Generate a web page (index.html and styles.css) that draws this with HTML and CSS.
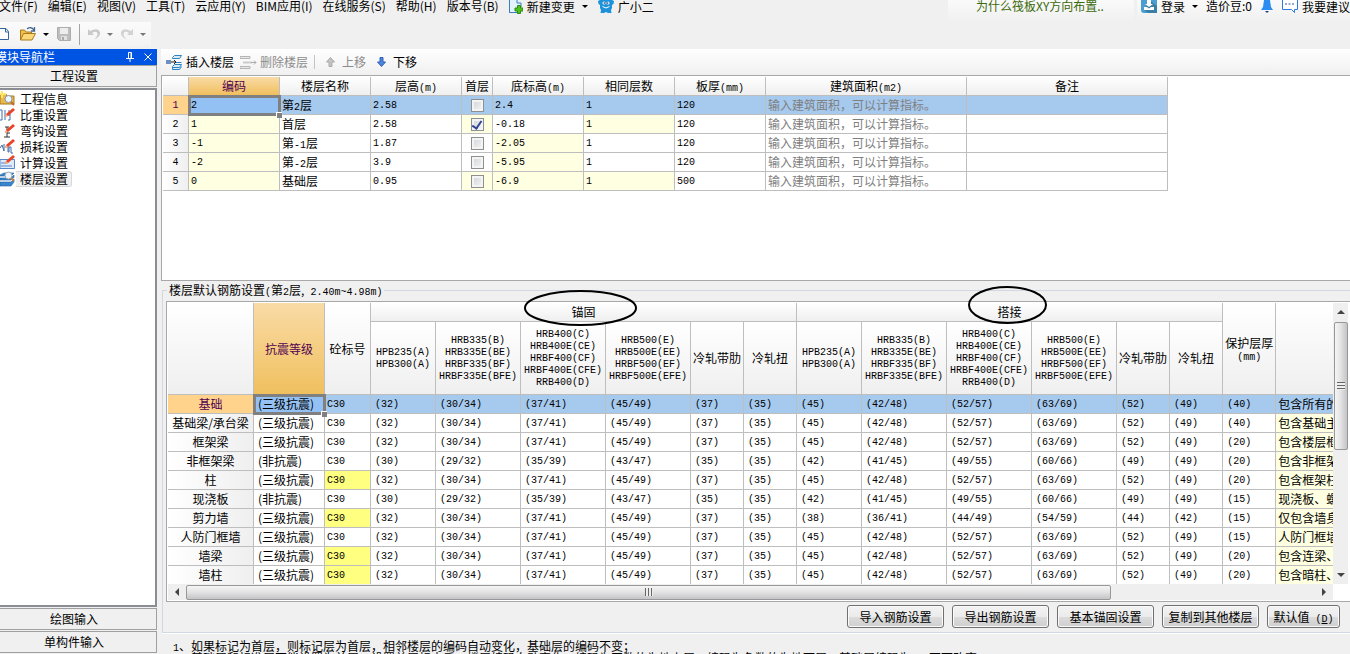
FILE: index.html
```
<!DOCTYPE html>
<html lang="zh-CN">
<head>
<meta charset="utf-8">
<title>楼层设置</title>
<link rel="stylesheet" href="styles.css">
</head>
<body>
<header class="top">
  <nav class="menubar">
    <button class="menu">文件(F)</button>
    <button class="menu">编辑(E)</button>
    <button class="menu">视图(V)</button>
    <button class="menu">工具(T)</button>
    <button class="menu">云应用(Y)</button>
    <button class="menu">BIM应用(I)</button>
    <button class="menu">在线服务(S)</button>
    <button class="menu">帮助(H)</button>
    <button class="menu">版本号(B)</button>
    <button class="menu with-icon">
      <svg width="14" height="14" viewBox="0 0 14 14"><path d="M.5-2v14.500h9" fill="#e8f5fc" stroke="#3c7fc0"/><path d="M1 0h11v7H7v5H1z" fill="#e3f3fb"/><path d="M.5 0v12.500h7M8 0v3h4v4" fill="none" stroke="#3c7fc0"/><path d="M8.500 5.500h3v2.500H14v3h-2.500v2.500h-3V11H6V8h2.500z" fill="#4cc21c" stroke="#2b8a12"/></svg>
      新建变更<i class="caret"></i>
    </button>
    <button class="menu with-icon">
      <svg width="16" height="13" viewBox="0 0 16 13"><path d="M2 0h12l2 1-.500 3-1.500 1v3l-1 2 .500 3H10l-2-1-2 1H2.500L3 10 2 8V5L.500 4 0 1z" fill="#1c92dc"/><circle cx="6" cy="3" r="1.500" fill="#fff"/><circle cx="10" cy="3" r="1.500" fill="#fff"/><circle cx="6.300" cy="3" r=".7" fill="#123"/><circle cx="9.700" cy="3" r=".7" fill="#123"/><path d="M4.500 6.500q3.500 3 7 0" fill="none" stroke="#fff"/></svg>
      广小二
    </button>
    <div class="account">
      <a class="tip" href="#">为什么筏板XY方向布置..</a>
      <div class="user">
        <button class="menu with-icon">
          <svg width="16" height="13" viewBox="0 0 16 13"><path d="M0 0h16v10q0 3-3 3H3q-3 0-3-3z" fill="#4a9fd0"/><path d="M8 0l8 6v7H7l-4-3z" fill="#3b7ea6"/><path d="M6 0h4v4h2L8 7 4 4h2zM3 7l3 0 2 1.500L10 7h3v3H3z" fill="#fff"/></svg>
          登录<i class="caret"></i>
        </button>
        <button class="menu">造价豆:0</button>
        <button class="menu with-icon" aria-label="通知">
          <svg width="14" height="13" viewBox="0 0 14 13"><path d="M4 0h6l1 7 2 3H1l2-3z" fill="#2c8cf0"/><path d="M5 11h4l-2 2z" fill="#1a3f74"/></svg>
        </button>
        <button class="menu with-icon">
          <svg width="16" height="13" viewBox="0 0 16 13"><path d="M.5 0v9.500h9l3 3v-3h3V0" fill="#fff" stroke="#2c7ce0"/><path d="M3 4h10" stroke="#2458a8" stroke-dasharray="2 1.500"/></svg>
          我要建议
        </button>
      </div>
    </div>
  </nav>
  <div class="filebar">
    <button class="tool" aria-label="新建"><svg width="12" height="16" viewBox="0 0 12 16"><path d="M-2 2.500H6l2.500 3v8H-2z" fill="#fff" stroke="#33659f"/><path d="M5.500 2.500V6h3" fill="none" stroke="#33659f"/></svg></button>
    <button class="tool" aria-label="打开"><svg width="18" height="16" viewBox="0 0 18 16"><path d="M1.500 14V4h4l1.500 2h5.500v3" fill="#f0c048" stroke="#a87a20"/><path d="M1.500 14l3-6.500h12l-3.500 6.500z" fill="#fbd777" stroke="#a87a20"/><path d="M8 3q4-3 7 1M15.500 1v4h-3.500" fill="none" stroke="#43688f" stroke-width="1.300"/></svg><i class="caret"></i></button>
    <button class="tool" aria-label="保存"><svg width="16" height="16" viewBox="0 0 16 16"><path d="M1.500 1.500h13v13h-11l-2-2z" fill="#bebebe" stroke="#acacac"/><path d="M4 2h8v6H4z" fill="#ededed"/><path d="M5 10h6v4H5z" fill="#e2e2e2"/><path d="M6 11h2v3H6z" fill="#aaa"/></svg></button>
    <span class="divider"></span>
    <button class="tool" aria-label="撤销"><svg width="14" height="14" viewBox="0 0 14 14"><path d="M1 2v6h6L5 6q5-3 5.500 1 0 2-3 5.500Q14 9 13 5q-2-5-10-1z" fill="#c9c9c9"/></svg><i class="caret dim"></i></button>
    <button class="tool" aria-label="恢复"><svg width="14" height="14" viewBox="0 0 14 14"><path d="M13 2v6H7l2-2Q4 3 3.500 7q0 2 3 5.500Q0 9 1 5q2-5 10-1z" fill="#d2d2d2"/></svg><i class="caret dim"></i></button>
  </div>
</header>

<div class="body">
  <aside class="side">
    <div class="side-title"><span>模块导航栏</span>
      <svg class="pin" width="8" height="10" viewBox="0 0 8 10"><path d="M2.500 6V.500h3V6M0 6.500h8M4 7v3" fill="none" stroke="#fff"/><path d="M5 1v5" stroke="#fff"/></svg>
      <svg width="8" height="8" viewBox="0 0 8 8"><path d="M.5.500l7 7m0-7l-7 7" stroke="#fff"/></svg>
    </div>
    <button class="section">工程设置</button>
    <ul class="tree">
      <li><svg width="16" height="16" viewBox="0 0 16 16"><path d="M0 3h6l1 2h7v8H0z" fill="#e9b94b" stroke="#a67a1c"/><path d="M2-1v8M-2 3h8" stroke="#ffe66a" stroke-width="2"/><circle cx="8.500" cy="8" r="3.500" fill="#eef6ff" stroke="#8796a8"/><path d="M11 11l3 3" stroke="#c06c2a" stroke-width="2"/></svg><a href="#">工程信息</a></li>
      <li><svg width="16" height="16" viewBox="0 0 16 16"><path d="M0 3h2v10H0M5 3v10M8 4h2v4H8m2 0v5H8" fill="none" stroke="#3f6dac"/><path d="M5 10l1-3 7-6 2 2-7 6z" fill="#e8442c"/><path d="M5 10l1-3 2 2z" fill="#f5c08a"/></svg><a href="#">比重设置</a></li>
      <li><svg width="16" height="16" viewBox="0 0 16 16"><path d="M5 4h4M7 4v10M4 14h6M7 10h3" stroke="#333" fill="none"/><path d="M5 10l1-3 7-6 2 2-7 6z" fill="#e8442c"/><path d="M5 10l1-3 2 2z" fill="#f5c08a"/></svg><a href="#">弯钩设置</a></li>
      <li><svg width="16" height="16" viewBox="0 0 16 16"><path d="M0 9l2-3 2 6V5M8 7v6h1V8h2v6h2" fill="none" stroke="#3f6dac"/><path d="M5 9l1-3 7-6 2 2-7 6z" fill="#e8442c"/><path d="M5 9l1-3 2 2z" fill="#f5c08a"/></svg><a href="#">损耗设置</a></li>
      <li><svg width="16" height="16" viewBox="0 0 16 16"><path d="M0 4.500h14.500v9H0z" fill="#dceafc" stroke="#5b87c8"/><path d="M1 8h5M1 11h11" stroke="#5b87c8"/><path d="M5 9l1-3 7-6 2 2-7 6z" fill="#e8442c"/><path d="M5 9l1-3 2 2z" fill="#f5c08a"/></svg><a href="#">计算设置</a></li>
      <li class="current"><svg width="16" height="16" viewBox="0 0 16 16"><path d="M0 4l4-2h10l-3 3H0zM0 7h11l3-3v2.500L11 9H0zM0 11h11l3-3v3l-3 4H0z" fill="#3a86cc" stroke="#2263a5" stroke-width=".6"/><circle cx="8.500" cy="4.500" r="3.500" fill="#edf5fd" stroke="#98a4b0"/><path d="M11 7l3 3" stroke="#c08445" stroke-width="2"/></svg><a href="#">楼层设置</a></li>
    </ul>
    <button class="section">绘图输入</button>
    <button class="section">单构件输入</button>
  </aside>

  <main class="main">
    <div class="actions">
      <button class="act"><svg width="17" height="17" viewBox="0 0 17 17"><path d="M6.500 3.500l2-2h7l-2 3h-7zM9 8.500h6.500M6.500 12.500l2-2h7l-2 3h-7zM6.500 13v2.500h7l2-3" fill="#d7ebfa" stroke="#2d83c4"/><path d="M0 6h5v4H0z" fill="#6f8fc0"/><path d="M5 8h5M8 6l2 2-2 2" stroke="#222" fill="none"/></svg>插入楼层</button>
      <button class="act off"><svg width="17" height="17" viewBox="0 0 17 17"><path d="M0 2.500h10v2H0zM0 12.500h10v2H0z" fill="#e8e8e8" stroke="#b5b5b5"/><path d="M3 7.500h9v2H3z" fill="#ccc"/><path d="M11 8.500h5M14 6.500l2 2-2 2" stroke="#aaa" fill="none"/></svg>删除楼层</button>
      <span class="divider short"></span>
      <button class="act move off"><svg width="11" height="11" viewBox="0 0 11 11"><path d="M5.500.500l4 4.500H7v4.500H4V5H1.500z" fill="#c4c4c4" stroke="#aaa"/></svg>上移</button>
      <button class="act move"><svg width="11" height="11" viewBox="0 0 11 11"><path d="M5.500 9.500l4-4.500H7V.500H4V5H1.500z" fill="#4f86dd" stroke="#2f5fb8"/></svg>下移</button>
    </div>

    <section class="floors">
      <table class="grid floor-grid">
        <colgroup><col class="w26"><col class="w91"><col class="w91"><col class="w91"><col class="w31"><col class="w91"><col class="w91"><col class="w91"><col class="w201"><col class="w201"></colgroup>
        <thead><tr><th></th><th class="hot">编码</th><th>楼层名称</th><th>层高<span class="n">(m)</span></th><th>首层</th><th>底标高<span class="n">(m)</span></th><th>相同层数</th><th>板厚<span class="n">(mm)</span></th><th>建筑面积<span class="n">(m2)</span></th><th>备注</th></tr></thead>
        <tbody>
          <tr class="sel"><th class="n">1</th><td class="n focus">2</td><td>第<span class="n">2</span>层</td><td class="n">2.58</td><td class="tick"><input type="checkbox" aria-label="首层 2"></td><td class="n">2.4</td><td class="n">1</td><td class="n">120</td><td class="hint">输入建筑面积，可以计算指标。</td><td></td></tr>
          <tr><th class="n">2</th><td class="n soft">1</td><td>首层</td><td class="n">2.58</td><td class="tick soft"><input type="checkbox" checked aria-label="首层 1"></td><td class="n">-0.18</td><td class="n soft">1</td><td class="n">120</td><td class="hint">输入建筑面积，可以计算指标。</td><td></td></tr>
          <tr><th class="n">3</th><td class="n soft">-1</td><td>第<span class="n">-1</span>层</td><td class="n">1.87</td><td class="tick"><input type="checkbox" aria-label="首层 -1"></td><td class="n soft">-2.05</td><td class="n">1</td><td class="n">120</td><td class="hint">输入建筑面积，可以计算指标。</td><td></td></tr>
          <tr><th class="n">4</th><td class="n soft">-2</td><td>第<span class="n">-2</span>层</td><td class="n">3.9</td><td class="tick"><input type="checkbox" aria-label="首层 -2"></td><td class="n soft">-5.95</td><td class="n">1</td><td class="n">120</td><td class="hint">输入建筑面积，可以计算指标。</td><td></td></tr>
          <tr><th class="n">5</th><td class="n soft">0</td><td>基础层</td><td class="n">0.95</td><td class="tick soft"><input type="checkbox" aria-label="首层 0"></td><td class="n soft">-6.9</td><td class="n soft">1</td><td class="n">500</td><td class="hint">输入建筑面积，可以计算指标。</td><td></td></tr>
        </tbody>
      </table>
    </section>

    <fieldset class="rebar">
      <legend>楼层默认钢筋设置<span class="n">(</span>第<span class="n">2</span>层,<span class="n"> 2.40m~4.98m)</span></legend>
      <div class="frame">
        <div class="view">
          <table class="grid rebar-grid">
            <colgroup><col class="w86"><col class="w71"><col class="w46"><col class="w65"><col class="w85"><col class="w85"><col class="w85"><col class="w53"><col class="w53"><col class="w65"><col class="w85"><col class="w85"><col class="w85"><col class="w53"><col class="w53"><col class="w53"><col class="w201"></colgroup>
            <thead>
              <tr><th rowspan="2"></th><th rowspan="2" class="hot">抗震等级</th><th rowspan="2">砼标号</th><th colspan="6">锚固</th><th colspan="6">搭接</th><th rowspan="2">保护层厚<br><span class="n">(mm)</span></th><th rowspan="2"></th></tr>
              <tr class="kinds">
                <th class="n">HPB235(A)<br>HPB300(A)</th><th class="n">HRB335(B)<br>HRB335E(BE)<br>HRBF335(BF)<br>HRBF335E(BFE)</th><th class="n">HRB400(C)<br>HRB400E(CE)<br>HRBF400(CF)<br>HRBF400E(CFE)<br>RRB400(D)</th><th class="n">HRB500(E)<br>HRB500E(EE)<br>HRBF500(EF)<br>HRBF500E(EFE)</th><th>冷轧带肋</th><th>冷轧扭</th>
                <th class="n">HPB235(A)<br>HPB300(A)</th><th class="n">HRB335(B)<br>HRB335E(BE)<br>HRBF335(BF)<br>HRBF335E(BFE)</th><th class="n">HRB400(C)<br>HRB400E(CE)<br>HRBF400(CF)<br>HRBF400E(CFE)<br>RRB400(D)</th><th class="n">HRB500(E)<br>HRB500E(EE)<br>HRBF500(EF)<br>HRBF500E(EFE)</th><th>冷轧带肋</th><th>冷轧扭</th>
              </tr>
            </thead>
            <tbody>
              <tr class="sel"><th>基础</th><td class="focus">(三级抗震)</td><td>C30</td><td>(32)</td><td>(30/34)</td><td>(37/41)</td><td>(45/49)</td><td>(37)</td><td>(35)</td><td>(45)</td><td>(42/48)</td><td>(52/57)</td><td>(63/69)</td><td>(52)</td><td>(49)</td><td>(40)</td><td>包含所有的基础构件</td></tr>
              <tr><th>基础梁/承台梁</th><td>(三级抗震)</td><td>C30</td><td>(32)</td><td>(30/34)</td><td>(37/41)</td><td>(45/49)</td><td>(37)</td><td>(35)</td><td>(45)</td><td>(42/48)</td><td>(52/57)</td><td>(63/69)</td><td>(52)</td><td>(49)</td><td>(40)</td><td>包含基础主梁、基础次梁</td></tr>
              <tr><th>框架梁</th><td>(三级抗震)</td><td>C30</td><td>(32)</td><td>(30/34)</td><td>(37/41)</td><td>(45/49)</td><td>(37)</td><td>(35)</td><td>(45)</td><td>(42/48)</td><td>(52/57)</td><td>(63/69)</td><td>(52)</td><td>(49)</td><td>(20)</td><td>包含楼层框架梁</td></tr>
              <tr><th>非框架梁</th><td>(非抗震)</td><td>C30</td><td>(30)</td><td>(29/32)</td><td>(35/39)</td><td>(43/47)</td><td>(35)</td><td>(35)</td><td>(42)</td><td>(41/45)</td><td>(49/55)</td><td>(60/66)</td><td>(49)</td><td>(49)</td><td>(20)</td><td>包含非框架梁</td></tr>
              <tr><th>柱</th><td>(三级抗震)</td><td class="warn">C30</td><td>(32)</td><td>(30/34)</td><td>(37/41)</td><td>(45/49)</td><td>(37)</td><td>(35)</td><td>(45)</td><td>(42/48)</td><td>(52/57)</td><td>(63/69)</td><td>(52)</td><td>(49)</td><td>(20)</td><td>包含框架柱</td></tr>
              <tr><th>现浇板</th><td>(非抗震)</td><td>C30</td><td>(30)</td><td>(29/32)</td><td>(35/39)</td><td>(43/47)</td><td>(35)</td><td>(35)</td><td>(42)</td><td>(41/45)</td><td>(49/55)</td><td>(60/66)</td><td>(49)</td><td>(49)</td><td>(15)</td><td>现浇板、螺旋板</td></tr>
              <tr><th>剪力墙</th><td>(三级抗震)</td><td class="warn">C30</td><td>(32)</td><td>(30/34)</td><td>(37/41)</td><td>(45/49)</td><td>(37)</td><td>(35)</td><td>(38)</td><td>(36/41)</td><td>(44/49)</td><td>(54/59)</td><td>(44)</td><td>(42)</td><td>(15)</td><td>仅包含墙身</td></tr>
              <tr><th>人防门框墙</th><td>(三级抗震)</td><td>C30</td><td>(32)</td><td>(30/34)</td><td>(37/41)</td><td>(45/49)</td><td>(37)</td><td>(35)</td><td>(45)</td><td>(42/48)</td><td>(52/57)</td><td>(63/69)</td><td>(52)</td><td>(49)</td><td>(15)</td><td>人防门框墙</td></tr>
              <tr><th>墙梁</th><td>(三级抗震)</td><td class="warn">C30</td><td>(32)</td><td>(30/34)</td><td>(37/41)</td><td>(45/49)</td><td>(37)</td><td>(35)</td><td>(45)</td><td>(42/48)</td><td>(52/57)</td><td>(63/69)</td><td>(52)</td><td>(49)</td><td>(20)</td><td>包含连梁、暗梁</td></tr>
              <tr><th>墙柱</th><td>(三级抗震)</td><td class="warn">C30</td><td>(32)</td><td>(30/34)</td><td>(37/41)</td><td>(45/49)</td><td>(37)</td><td>(35)</td><td>(45)</td><td>(42/48)</td><td>(52/57)</td><td>(63/69)</td><td>(52)</td><td>(49)</td><td>(20)</td><td>包含暗柱、端柱</td></tr>
            </tbody>
          </table>
        </div>
        <div class="bar bar-v"><i class="arrow up"></i><div class="thumb"><i class="grip"></i></div><i class="arrow down"></i></div>
        <div class="bar bar-h"><i class="arrow left"></i><div class="thumb"><i class="grip"></i></div><i class="arrow right"></i></div>
        <svg class="mark mark-a" viewBox="0 0 113 36"><ellipse cx="56.500" cy="18" rx="55.500" ry="17"/></svg>
        <svg class="mark mark-b" viewBox="0 0 79 38"><ellipse cx="39.500" cy="19" rx="38.500" ry="18"/></svg>
      </div>
      <div class="buttons">
        <button class="btn">导入钢筋设置</button>
        <button class="btn">导出钢筋设置</button>
        <button class="btn">基本锚固设置</button>
        <button class="btn">复制到其他楼层</button>
        <button class="btn small">默认值<span class="n"> (<u>D</u>)</span></button>
      </div>
    </fieldset>

    <section class="notes">
      <p><span class="n">1</span>、如果标记为首层，则标记层为首层，相邻楼层的编码自动变化，基础层的编码不变；</p>
      <p><span class="n">2</span>、基础层和标准层不能设置为首层，设置首层标志后，楼层编码自动变化，编码为正数的为地上层，编码为负数的为地下层，基础层编码为<span class="n">0</span>，不可改变；</p>
    </section>
  </main>
</div>
</body>
</html>
```
FILE: styles.css
```
* { box-sizing: border-box; }

body {
  margin: 0;
  height: 100vh;
  display: flex;
  flex-direction: column;
  overflow: hidden;
  background: #f0f0f0;
  color: #000;
  font: 12px/12px "Noto Sans CJK SC", sans-serif;
}

button {
  font: inherit;
  color: inherit;
  padding: 0;
  border: 0;
  background: none;
  white-space: nowrap;
}

a { color: inherit; text-decoration: none; }
svg { flex: none; display: block; }

.n { font-family: "Liberation Mono", monospace; font-size: 10px; white-space: pre; }
span.n { line-height: 0; }

.caret {
  border: 3px solid transparent;
  border-top-color: #000;
  border-bottom: 0;
  margin: 0 0 0 3px;
}
.caret.dim { border-top-color: #777; }

/* Menu and file toolbar */
.top { flex: none; height: 49px; }
.menubar { display: flex; gap: 10px; height: 21px; align-items: flex-start; margin-left: -1px; }
.menu { height: 12px; flex: none; }
.with-icon { display: flex; gap: 4px; align-items: center; height: 13px; }

.account { margin-left: auto; display: flex; gap: 3px; width: 402px; height: 21px; flex: none; }
.tip {
  width: 186px;
  padding-left: 28px;
  color: #3a6a0a;
  white-space: nowrap;
  background: linear-gradient(#fafafa, #f0f0f0);
}
.user { flex: 1; display: flex; gap: 8px; padding-left: 4px; min-width: 0; background: linear-gradient(#fafafa, #f0f0f0); }

.filebar {
  display: flex;
  align-items: center;
  width: 151px;
  height: 24px;
  margin-top: 1px;
  gap: 7px;
  background: linear-gradient(#fbfbfb, #f3f3f3);
}
.tool { display: flex; align-items: center; gap: 3px; }
.divider { width: 1px; height: 21px; background: #a5a5a5; }
.divider.short { height: 14px; background: #c4c4c4; }

.body { flex: 1; display: flex; min-height: 0; gap: 4px; }

/* Navigation pane */
.side { width: 157px; flex: none; display: flex; flex-direction: column; }
.side-title {
  display: flex;
  align-items: center;
  gap: 10px;
  height: 16px;
  padding-right: 5px;
  background: #0054e3;
  color: #fff;
}
.side-title span { flex: 1; margin-left: -5px; }
.section {
  height: 22px;
  border: 1px solid #a0a0a0;
  border-width: 1px 1px 1px 0;
  margin-bottom: 1px;
  padding-right: 8px;
}
.tree {
  flex: 1;
  list-style: none;
  margin: 0 0 1px;
  padding: 1px 0 0;
  background: #fff;
  border: 2px solid #8a8d94;
  border-left: 0;
}
.tree li { height: 16px; display: flex; align-items: center; }
.tree a { padding: 1px 3px 1px 4px; }
.tree .current a { background: #f0f0f0; border: 1px solid #d8d8d8; border-left: 0; border-radius: 0 3px 3px 0; }

/* Floor actions */
.main { flex: 1; min-width: 0; display: flex; flex-direction: column; }
.actions {
  flex: none;
  display: flex;
  align-items: center;
  gap: 6px;
  height: 26px;
  padding-left: 5px;
  background: linear-gradient(#fff, #f0f0f0);
}
.act { display: flex; align-items: center; gap: 3px; }
.act.move { gap: 6px; margin-left: 4px; }
.act.off { color: #8c8c8c; }

.floors {
  flex: 1;
  min-height: 120px;
  overflow: hidden;
  padding: 1px;
  background: #fff;
  border: 1px solid #a8a8a8;
  border-right: 0;
}

/* Data grids */
.grid { table-layout: fixed; border-collapse: separate; border-spacing: 0; width: 0; }
.grid th, .grid td {
  height: 19px;
  padding: 0 2px;
  border: solid #bebebe;
  border-width: 0 1px 1px 0;
  font-weight: normal;
  white-space: nowrap;
  overflow: hidden;
}
.grid th { padding: 0; text-align: center; background: linear-gradient(#fff, #efefef); }
.grid td { text-align: left; background: #fff; }
.grid th.n, .grid td.n { padding-top: 2px; }
.grid tbody th { background: linear-gradient(90deg, #fff, #efefef); }
.grid .hot { background: linear-gradient(#f9dba6, #f0c05e); color: #500050; }
.grid .sel td { background: #a6c9ee; }
.grid .sel th { background: #ffd38c; color: #500050; }
.grid .soft { background: #ffffe1; }
.grid .hint { color: #808080; }
.grid .tick { padding: 0; text-align: center; }
.grid .focus {
  position: relative;
  overflow: visible;
  outline: 3px solid #808080;
  outline-offset: -2px;
}
.grid .sel .focus { background: #94c1f3; }
.focus::after {
  content: "";
  position: absolute;
  right: -3px;
  bottom: -4px;
  width: 5px;
  height: 5px;
  background: #808080;
  border: solid #fff;
  border-width: 1px 0 0 1px;
}

.w26 { width: 26px; } .w31 { width: 31px; } .w46 { width: 46px; }
.w53 { width: 53px; } .w65 { width: 65px; } .w71 { width: 71px; }
.w85 { width: 85px; } .w86 { width: 86px; } .w91 { width: 91px; }
.w201 { width: 201px; }

.tick input {
  appearance: none;
  display: block;
  width: 13px;
  height: 13px;
  margin: 0 auto;
  border: 1px solid #8e8f8f;
  background: linear-gradient(135deg, #cfd3d8, #f6f6f6);
  box-shadow: inset 0 0 0 2px #f4f4f4;
}
.tick input:checked::after {
  content: "";
  display: block;
  width: 4px;
  height: 8px;
  margin: 0 auto;
  border: solid #31449c;
  border-width: 0 2px 2px 0;
  transform: rotate(35deg);
}

/* Default rebar settings */
.rebar {
  flex: none;
  min-width: 0;
  margin: 3px 0 0 1px;
  padding: 5px 0 4px 3px;
  border: 1px solid #d0d9e2;
  border-right: 0;
}
.rebar legend { height: 12px; padding: 0 2px; margin-left: 1px; }
.frame {
  position: relative;
  display: grid;
  grid-template: 281px 16px / minmax(0, 1fr) 15px;
  padding: 1px 2px 1px 1px;
  background: #fff;
  border: 1px solid #a8a8a8;
  border-right: 0;
}
.view { overflow: hidden; }
.rebar-grid td { font-family: "Liberation Mono", monospace; font-size: 10px; padding: 2px 0 0 4px; }
.rebar-grid td:nth-child(3) { padding-left: 2px; }
.rebar-grid td:nth-child(2),
.rebar-grid td:last-child { font: 12px/12px "Noto Sans CJK SC", sans-serif; padding-top: 0; }
.rebar-grid td:last-child { padding-left: 2px; background: #ffffe1; }
.rebar-grid .sel td:last-child { background: #a6c9ee; }
.rebar-grid .warn { background: #ffff80; }
.rebar-grid .kinds th { height: 73px; }

.mark { position: absolute; fill: none; stroke: #000; stroke-width: 2; }
.mark-a { left: 357px; top: -12px; width: 113px; height: 36px; }
.mark-b { left: 801px; top: -16px; width: 79px; height: 38px; }

/* Scroll bars */
.bar { display: flex; align-items: center; background: #efefef; }
.bar-v { flex-direction: column; padding: 7px 0; }
.bar-v .thumb { width: 14px; flex: 0 0 128px; margin: 8px 0 auto; background: linear-gradient(90deg, #f5f5f5, #e4e4e4 45%, #c4c4c8); }
.bar-h { padding: 0 7px; }
.bar-h .thumb { height: 15px; flex: 0 1 925px; margin: 0 auto 0 7px; background: linear-gradient(#f5f5f5, #e4e4e4 45%, #c4c4c8); }
.thumb { display: flex; align-items: center; justify-content: center; border: 1px solid #989898; border-radius: 2px; }
.grip { width: 8px; height: 8px; background: repeating-linear-gradient(90deg, #666 0 1px, #eee 1px 3px); }
.bar-v .grip { background: repeating-linear-gradient(#666 0 1px, #eee 1px 3px); }
.arrow { border: 4px solid transparent; }
.up { border-top: 0; border-bottom-color: #444; }
.down { border-bottom: 0; border-top-color: #444; }
.left { border-left: 0; border-right-color: #444; }
.right { border-right: 0; border-left-color: #444; }

.buttons { display: flex; justify-content: flex-end; gap: 8px; padding: 3px 10px 0 0; }
.btn {
  width: 97px;
  height: 23px;
  border: 1px solid #707070;
  border-radius: 3px;
  background: linear-gradient(#f3f3f3, #ebebeb 50%, #dcdcdc 51%, #cfcfcf);
  box-shadow: inset 0 0 0 1px #fafafa;
}
.btn.small { width: 73px; }

.notes { flex: none; height: 21px; margin-left: 1px; padding: 6px 0 0 11px; border-top: 1px solid #fff; }
.notes p { margin: 0; height: 12px; white-space: nowrap; }
```
